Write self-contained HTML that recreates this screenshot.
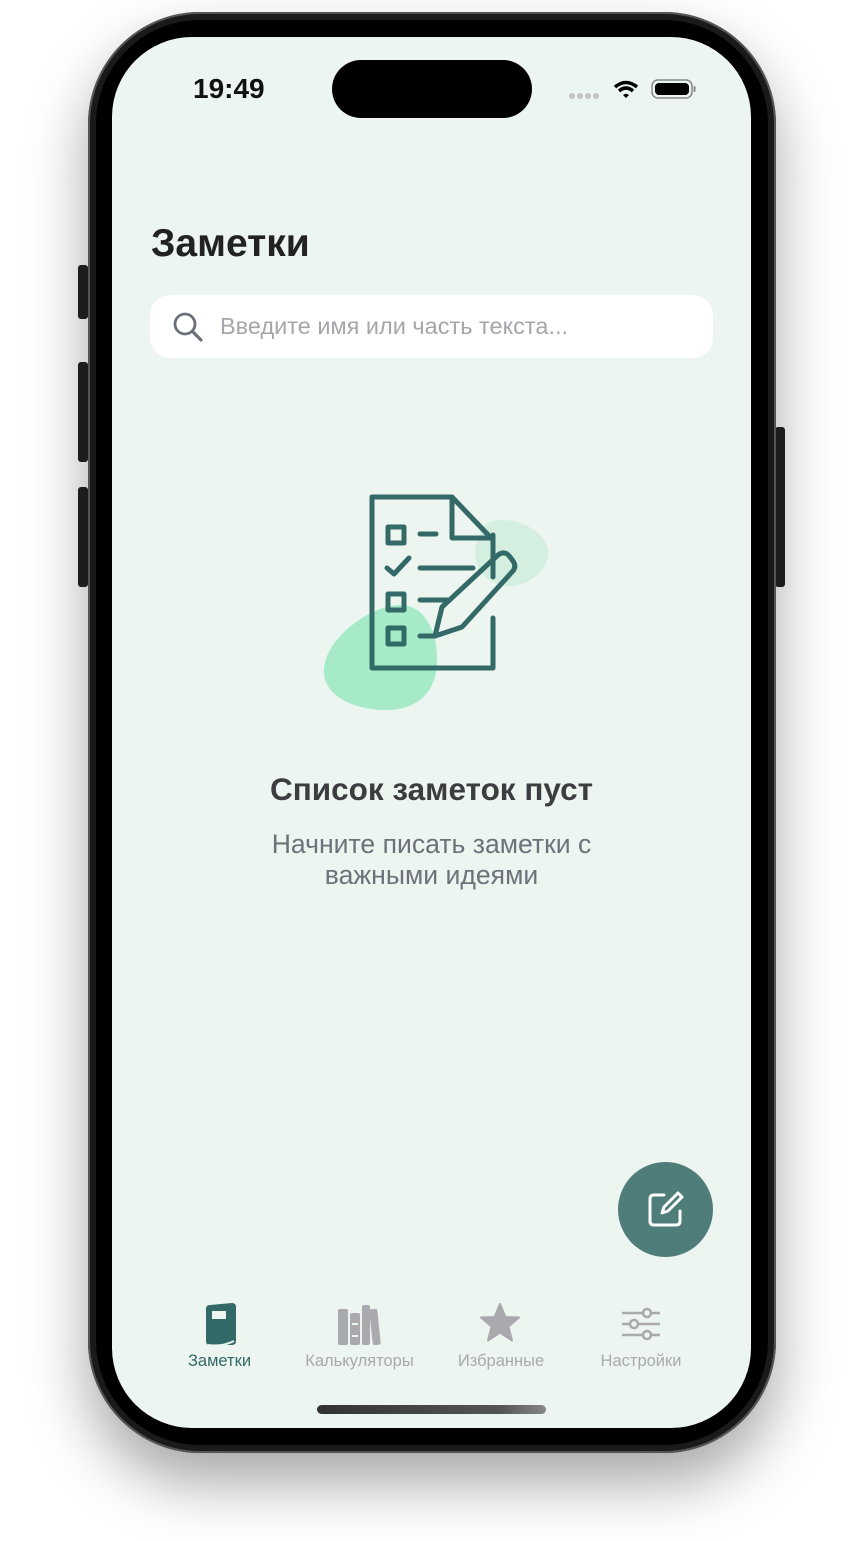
<!DOCTYPE html>
<html><head><meta charset="utf-8"><style>
*{margin:0;padding:0;box-sizing:border-box}
body{width:862px;height:1541px;background:#fff;position:relative;overflow:hidden;font-family:"Liberation Sans","DejaVu Sans",sans-serif}
.abs{position:absolute}
.phone{left:88px;top:12px;width:688px;height:1441px;border-radius:112px;background:#1a1a1a;box-shadow:0 30px 60px rgba(0,0,0,.35),0 0 0 2px #555 inset;}
.bezel{left:96px;top:20px;width:672px;height:1425px;border-radius:104px;background:#000}
.screen{left:112px;top:37px;width:639px;height:1391px;border-radius:80px;background:#edf5f0;overflow:hidden}
.btn{background:#222;border-radius:3px;width:10px}
</style></head><body>
<div class="abs btn" style="left:78px;top:265px;height:54px"></div>
<div class="abs btn" style="left:78px;top:362px;height:100px"></div>
<div class="abs btn" style="left:78px;top:487px;height:100px"></div>
<div class="abs btn" style="left:775px;top:427px;height:160px"></div>
<div class="abs phone"></div>
<div class="abs bezel"></div>
<div class="abs screen">
  <div class="abs" style="left:220px;top:23px;width:200px;height:58px;border-radius:29px;background:#000"></div>
  <div class="abs" style="left:81px;top:36px;font-size:28px;font-weight:bold;color:#111">19:49</div>
  <svg class="abs" style="left:456px;top:42px" width="130" height="24" viewBox="0 0 130 24">
    <g fill="#c4c4c4"><circle cx="4" cy="17" r="3"/><circle cx="12" cy="17" r="3"/><circle cx="20" cy="17" r="3"/><circle cx="28" cy="17" r="3"/></g>
    <path d="M47 8 Q58 -1 69 8" stroke="#000" stroke-width="3.5" fill="none"/>
    <path d="M51 12 Q58 6 65 12" stroke="#000" stroke-width="3.5" fill="none"/>
    <path d="M55 16 L58 19 L61 16 Q58 13.5 55 16Z" fill="#000"/>
    <rect x="84" y="1" width="40" height="18" rx="6" fill="none" stroke="#888" stroke-width="1.5"/>
    <rect x="87" y="4" width="34" height="12" rx="4" fill="#000"/>
    <rect x="125.5" y="7" width="2" height="6" rx="1" fill="#888"/>
  </svg>
  <div class="abs" style="left:39px;top:185px;font-size:39px;font-weight:bold;color:#222">Заметки</div>
  <div class="abs" style="left:38px;top:258px;width:563px;height:63px;border-radius:20px;background:#fff">
    <svg class="abs" style="left:22px;top:16px" width="34" height="34" viewBox="0 0 34 34"><circle cx="13" cy="13" r="10" fill="none" stroke="#6b6f7a" stroke-width="2.8"/><path d="M20.5 20.5 L29 29" stroke="#6b6f7a" stroke-width="3.2" stroke-linecap="round"/></svg>
    <div class="abs" style="left:70px;top:18px;font-size:23.5px;color:#a4a6ab">Введите имя или часть текста...</div>
  </div>
  <svg class="abs" style="left:0;top:0" width="639" height="720">
    <path d="M380 484 C410 478 440 500 436 520 C432 540 405 555 385 547 C365 540 360 520 365 505 C368 495 372 486 380 484Z" fill="#d4efe0"/>
    <path d="M288 568 C310 568 326 590 325 625 C324 660 300 675 268 673 C235 671 210 655 212 632 C214 600 260 568 288 568Z" fill="#a6eac8"/>
    <g fill="none" stroke="#336966" stroke-width="5" stroke-linejoin="round" stroke-linecap="round">
      <path d="M381 540 L381 498 M381 581 L381 631 L260 631 L260 460 L340 460 L381 503"/>
      <path d="M340 460 L340 501 L381 501"/>
      <rect x="276" y="490" width="16" height="16"/>
      <rect x="276" y="557" width="16" height="16"/>
      <rect x="276" y="591" width="16" height="16"/>
      <path d="M308 497 L324 497 M308 531 L361 531 M308 563 L335 563 M308 599 L323 599"/>
      <path d="M275 531 L282 537 L297 521"/>
      <path d="M323 599 L330 570 L386 518 Q393 513 398 520 L401 524 Q405 530 400 535 L350 590 Z"/>
    </g>
  </svg>
  <div class="abs" style="left:0;width:639px;top:734px;text-align:center;font-size:31.5px;font-weight:bold;color:#3b3d40">Список заметок пуст</div>
  <div class="abs" style="left:0;width:639px;top:792px;text-align:center;font-size:26.6px;line-height:31px;color:#6d727a">Начните писать заметки с<br>важными идеями</div>
  <div class="abs" style="left:506px;top:1125px;width:95px;height:95px;border-radius:50%;background:#4e7d7a">
    <svg class="abs" style="left:28px;top:27px" width="40" height="40" viewBox="0 0 40 40" fill="none" stroke="#fff" stroke-width="3" stroke-linecap="round" stroke-linejoin="round"><path d="M18 6 H8 Q4 6 4 10 V32 Q4 36 8 36 H30 Q34 36 34 32 V22"/><path d="M16 24 L18 18 L32 4 L36 8 L22 22 Z"/></svg>
  </div>
  <svg class="abs" style="left:90px;top:1264px" width="38" height="48" viewBox="0 0 38 48"><path d="M4 8 Q4 4 8 4 L30 2 Q34 2 34 6 V40 Q34 44 30 44 H8 Q4 44 4 40Z" fill="#336966"/><rect x="10" y="10" width="14" height="8" fill="#edf5f0"/><path d="M6 44 Q20 46 32 40" stroke="#edf5f0" stroke-width="2" fill="none"/></svg>
  <div class="abs" style="left:55px;top:1315px;width:105px;text-align:center;font-size:16.5px;color:#336966">Заметки</div>
  <svg class="abs" style="left:224px;top:1266px" width="48" height="42" viewBox="0 0 48 42" fill="#a9a9ae"><rect x="2" y="6" width="10" height="36" rx="2"/><rect x="14" y="10" width="10" height="32" rx="2"/><rect x="26" y="2" width="8" height="40" rx="2"/><rect x="35" y="6" width="8" height="36" rx="2" transform="rotate(-6 39 24)"/><rect x="16" y="20" width="6" height="2" fill="#edf5f0"/><rect x="16" y="32" width="6" height="2" fill="#edf5f0"/></svg>
  <div class="abs" style="left:175px;top:1315px;width:145px;text-align:center;font-size:16.5px;color:#a9a9ae">Калькуляторы</div>
  <svg class="abs" style="left:367px;top:1265px" width="42" height="42" viewBox="0 0 42 42"><path d="M21 2 L26.5 15 L40 15.5 L29.5 24.5 L33 38.5 L21 30.5 L9 38.5 L12.5 24.5 L2 15.5 L15.5 15Z" fill="#a9a9ae" stroke="#a9a9ae" stroke-width="2" stroke-linejoin="round"/></svg>
  <div class="abs" style="left:325px;top:1315px;width:128px;text-align:center;font-size:16.5px;color:#a9a9ae">Избранные</div>
  <svg class="abs" style="left:508px;top:1270px" width="42" height="36" viewBox="0 0 42 36" fill="none" stroke="#a9a9ae" stroke-width="2.5"><path d="M2 6 H22 M32 6 H40 M2 17 H9 M19 17 H40 M2 28 H22 M32 28 H40"/><circle cx="27" cy="6" r="4"/><circle cx="14" cy="17" r="4"/><circle cx="27" cy="28" r="4"/></svg>
  <div class="abs" style="left:465px;top:1315px;width:128px;text-align:center;font-size:16.5px;color:#a9a9ae">Настройки</div>
  <div class="abs" style="left:205px;top:1368px;width:229px;height:9px;border-radius:5px;background:linear-gradient(90deg,#333,#555 80%,#888)"></div>
</div>
</body></html>
